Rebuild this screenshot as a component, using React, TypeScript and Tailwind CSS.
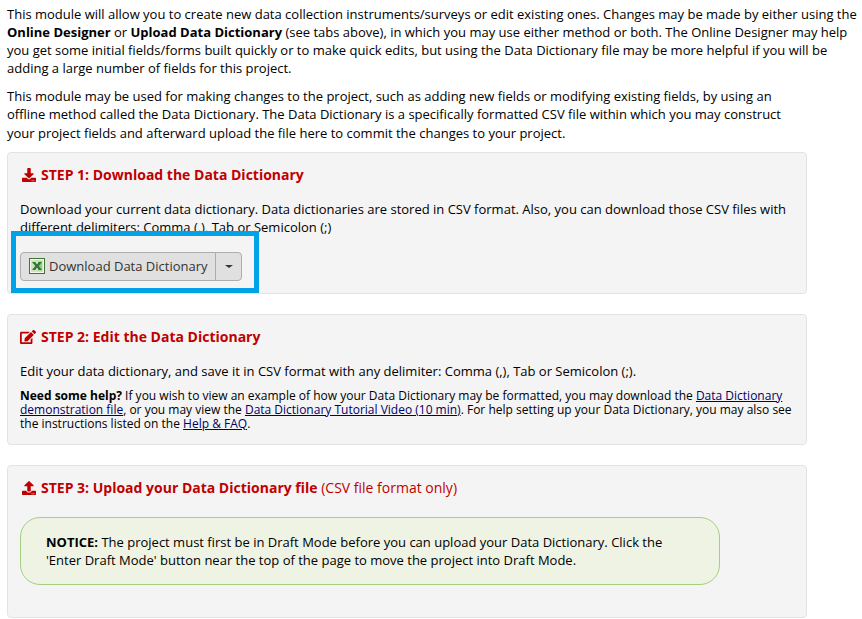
import React from "react";
import { FaDownload, FaEdit, FaUpload } from "react-icons/fa";

function ExcelIcon() {
  return (
    <svg width="16" height="16" viewBox="0 0 16 16" className="shrink-0">
      <rect x="0.5" y="0.5" width="15" height="15" fill="#dfe9d4" stroke="#3f7431" />
      <rect x="1.5" y="1.5" width="13" height="13" fill="#cfe3bf" stroke="#f4f8ee" />
      <path d="M9 3.5h4v9H9z" fill="#9fc68a" />
      <path d="M3 4h3.2l1.8 2.4L9.8 4H13l-3.3 4L13 12H9.8L8 9.6 6.2 12H3l3.3-4z" fill="#2c7a33" />
    </svg>
  );
}

function Title({ icon, children }: { icon: React.ReactNode; children: React.ReactNode }) {
  return (
    <div className="flex items-center gap-[6px] text-[14px] leading-[20px] text-[#C00000]">
      <span className="flex w-[15px] justify-center">{icon}</span>
      <div>{children}</div>
    </div>
  );
}

const linkCls = "text-[#000066] underline";

export default function App() {
  return (
    <div className="relative h-[619px] w-[862px] overflow-hidden bg-white px-[7px] pt-[4.6px] font-['Open_Sans',sans-serif] text-[13px] leading-[18.2px] text-black">
      <p className="w-[852px]">
        This module will allow you to create new data collection instruments/surveys or edit existing ones. Changes may be made by either using the <b>Online Designer</b> or <b>Upload Data Dictionary</b> (see tabs above), in which you may use either method or both. The Online Designer may help you get some initial fields/forms built quickly or to make quick edits, but using the Data Dictionary file may be more helpful if you will be adding a large number of fields for this project.
      </p>
      <p className="mt-[9.8px] w-[800px]">
        This module may be used for making changes to the project, such as adding new fields or modifying existing fields, by using an offline method called the Data Dictionary. The Data Dictionary is a specifically formatted CSV file within which you may construct your project fields and afterward upload the file here to commit the changes to your project.
      </p>

      <div className="mt-[10.6px] h-[142px] w-[800px] rounded-[4px] border border-[#e3e3e3] bg-[#f4f4f4] px-[12px] pt-[12px]">
        <Title icon={<span className="ml-[3px]"><FaDownload size={14} /></span>}>
          <b>STEP 1: Download the Data Dictionary</b>
        </Title>
        <p className="mt-[14.6px]">
          Download your current data dictionary. Data dictionaries are stored in CSV format. Also, you can download those CSV files with different delimiters: Comma (,), Tab or Semicolon (;)
        </p>
        <div className="mt-[15.6px] flex h-[29px] w-[222px] rounded-[4px] border border-[#adadad] bg-[#e0e0e0] text-[#333333]">
          <div className="flex flex-1 items-center gap-[4px] border-r border-[#adadad] pb-[1px] pl-[8px]">
            <ExcelIcon />
            <span>Download Data Dictionary</span>
          </div>
          <div className="flex w-[25px] items-center justify-center">
            <span className="h-0 w-0 border-x-[4px] border-t-[3px] border-x-transparent border-t-[#333333]" />
          </div>
        </div>
      </div>

      <div className="mt-[20px] h-[131px] w-[800px] rounded-[4px] border border-[#e3e3e3] bg-[#f4f4f4] px-[12px] pt-[12px]">
        <Title icon={<span className="ml-[1px]"><FaEdit size={16} /></span>}>
          <b>STEP 2: Edit the Data Dictionary</b>
        </Title>
        <p className="mt-[15px]">
          Edit your data dictionary, and save it in CSV format with any delimiter: Comma (,), Tab or Semicolon (;).
        </p>
        <p className="mt-[8px] text-[12px] leading-[14px]">
          <b>Need some help?</b> If you wish to view an example of how your Data Dictionary may be formatted, you may download the <span className={linkCls}>Data Dictionary demonstration file</span>, or you may view the <span className={linkCls}>Data Dictionary Tutorial Video (10 min)</span>. For help setting up your Data Dictionary, you may also see the instructions listed on the <span className={linkCls}>Help &amp; FAQ</span>.
        </p>
      </div>

      <div className="mt-[20px] h-[153px] w-[800px] rounded-[4px] border border-[#e3e3e3] bg-[#f4f4f4] px-[12px] pt-[12px]">
        <Title icon={<span className="ml-[3px]"><FaUpload size={14} /></span>}>
          <b>STEP 3: Upload your Data Dictionary file</b> <span>(CSV file format only)</span>
        </Title>
        <div className="mt-[19px] h-[68px] w-[700px] rounded-[20px] border border-[#a5cf7f] bg-[#eef3e3] pl-[25px] pr-[40px] pt-[14.6px]">
          <b>NOTICE:</b> The project must first be in Draft Mode before you can upload your Data Dictionary. Click the 'Enter Draft Mode' button near the top of the page to move the project into Draft Mode.
        </div>
      </div>

      <div className="pointer-events-none absolute left-[11px] top-[231px] h-[62px] w-[248px] border-[5px] border-[#00a2e8]" />
    </div>
  );
}
